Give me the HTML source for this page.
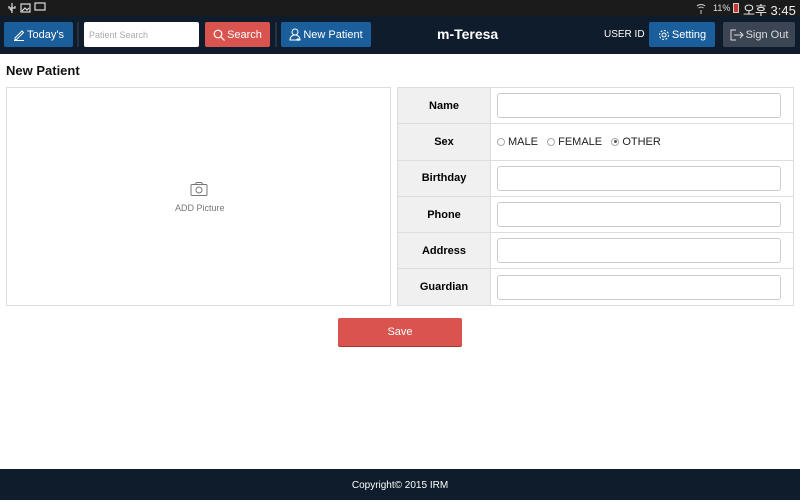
<!DOCTYPE html>
<html><head><meta charset="utf-8"><style>
*{box-sizing:border-box;margin:0;padding:0}
body{width:800px;height:500px;position:relative;background:#fff;font-family:"Liberation Sans","Noto Sans CJK KR",sans-serif;overflow:hidden}
.abs{position:absolute}
.sb{left:0;top:0;width:800px;height:16px;background:#1b1b1b;color:#ddd;font-size:12px}
.nav{left:0;top:16px;width:800px;height:38px;background:#0f1c2b}
.btn{position:absolute;top:6px;height:25px;border-radius:2px;color:#fff;font-size:11px;display:flex;align-items:center;justify-content:center;gap:2px}
.blue{background:#1a5e9c}
.red{background:#d9534f}
.div{position:absolute;top:6px;width:2px;height:25px;background:#26323f}
table{border-collapse:collapse}
td{border:1px solid #ddd;height:36.3px;font-size:11px}
td.l{width:93px;background:#f0f0f0;font-weight:bold;text-align:center}
td.v{padding:0 6px}
.in{width:284px;height:25px;border:1px solid #ccc;border-radius:3px;background:#fff}
.rad{display:inline-block;width:8px;height:8px;border:1px solid #aaa;border-radius:50%;vertical-align:-1px;margin-right:3px;position:relative}
</style></head><body>
<div class="abs sb">
<svg class="abs" style="left:7px;top:2px" width="40" height="12" viewBox="0 0 40 12" fill="none" stroke="#ddd" stroke-width="1.2"><path d="M5 1v10M2 4v2h6V4M5 9l-2-2"/><rect x="14" y="2" width="9" height="8"/><path d="M15 9l3-3 2 2 2-2" /><rect x="28" y="1" width="10" height="7"/></svg>
<svg class="abs" style="left:696px;top:2px" width="10" height="12" viewBox="0 0 10 12" fill="none" stroke="#ccc"><path d="M1 4a6 6 0 0 1 8 0M2.5 6a4 4 0 0 1 5 0M5 8v4"/></svg>
<span class="abs" style="left:713px;top:3px;font-size:9px">11%</span>
<span class="abs" style="left:733px;top:3px;width:6px;height:10px;background:#c33;border:1px solid #ccc"></span>
<span class="abs" style="left:743px;top:0;font-size:13px;color:#eee">오후 3:45</span>
</div>
<div class="abs nav">
<div class="btn blue" style="left:4px;width:69px"><svg width="12" height="12" viewBox="0 0 12 12" fill="none" stroke="#fff"><path d="M2 9l7-7 1.5 1.5-7 7H2zM1 11.5h10"/></svg>Today's</div>
<div class="div" style="left:77px"></div>
<div class="btn" style="left:84px;width:115px;background:#fff;color:#aaa;justify-content:flex-start;padding-left:5px;font-size:9px">Patient Search</div>
<div class="btn red" style="left:205px;width:65px"><svg width="12" height="12" viewBox="0 0 12 12" fill="none" stroke="#fff" stroke-width="1.2"><circle cx="5" cy="5" r="3.8"/><path d="M8 8l3.5 3.5"/></svg>Search</div>
<div class="div" style="left:275px"></div>
<div class="btn blue" style="left:281px;width:90px"><svg width="12" height="13" viewBox="0 0 12 13" fill="none" stroke="#fff"><circle cx="6" cy="4" r="3"/><path d="M1 12c0-3 2-5 5-5s5 2 5 5zM9 10v3M7.5 11.5h3"/></svg>New Patient</div>
<div class="abs" style="left:437px;top:10px;color:#fff;font-weight:bold;font-size:14px">m-Teresa</div>
<div class="abs" style="left:604px;top:13px;color:#fff;font-size:10px">USER ID</div>
<div class="btn blue" style="left:649px;width:66px"><svg width="12" height="12" viewBox="0 0 12 12" fill="none" stroke="#fff"><circle cx="6" cy="6" r="2"/><circle cx="6" cy="6" r="4.5" stroke-dasharray="2 1.5"/></svg>Setting</div>
<div class="btn" style="left:723px;width:72px;background:#3b4553;color:#ddd"><svg width="14" height="12" viewBox="0 0 14 12" fill="none" stroke="#ddd"><path d="M6 1H1v10h5M4 6h9M10 3l3 3-3 3"/></svg>Sign Out</div>
</div>
<div class="abs" style="left:6px;top:63px;font-size:13px;font-weight:bold;color:#111">New Patient</div>
<div class="abs" style="left:6px;top:87px;width:385px;height:219px;border:1px solid #ddd"></div>
<svg class="abs" style="left:190px;top:181px" width="18" height="16" viewBox="0 0 18 16" fill="none" stroke="#777"><rect x="1" y="3.5" width="16" height="11" rx="1"/><path d="M5 3.5l1.5-2h5l1.5 2"/><circle cx="9" cy="9" r="3"/></svg>
<div class="abs" style="left:175px;top:203px;font-size:9px;color:#777">ADD Picture</div>
<table class="abs" style="left:397px;top:87px;width:397px">
<tr><td class="l">Name</td><td class="v"><div class="in"></div></td></tr>
<tr><td class="l">Sex</td><td class="v" style="font-size:11px;color:#222"><span class="rad"></span>MALE &nbsp;&nbsp;<span class="rad"></span>FEMALE &nbsp;&nbsp;<span class="rad"><span class="abs" style="left:1.5px;top:1.5px;width:3px;height:3px;border-radius:50%;background:#555"></span></span>OTHER</td></tr>
<tr><td class="l">Birthday</td><td class="v"><div class="in"></div></td></tr>
<tr><td class="l">Phone</td><td class="v"><div class="in"></div></td></tr>
<tr><td class="l">Address</td><td class="v"><div class="in"></div></td></tr>
<tr><td class="l">Guardian</td><td class="v"><div class="in"></div></td></tr>
</table>
<div class="abs red" style="left:338px;top:318px;width:124px;height:29px;border-radius:2px;color:#fff;font-size:11px;display:flex;align-items:center;justify-content:center;border-bottom:1px solid #a33">Save</div>
<div class="abs" style="left:0;top:469px;width:800px;height:31px;background:#0f1c2b;color:#fff;font-size:10px;text-align:center;line-height:33px">Copyright© 2015 IRM</div>
</body></html>
